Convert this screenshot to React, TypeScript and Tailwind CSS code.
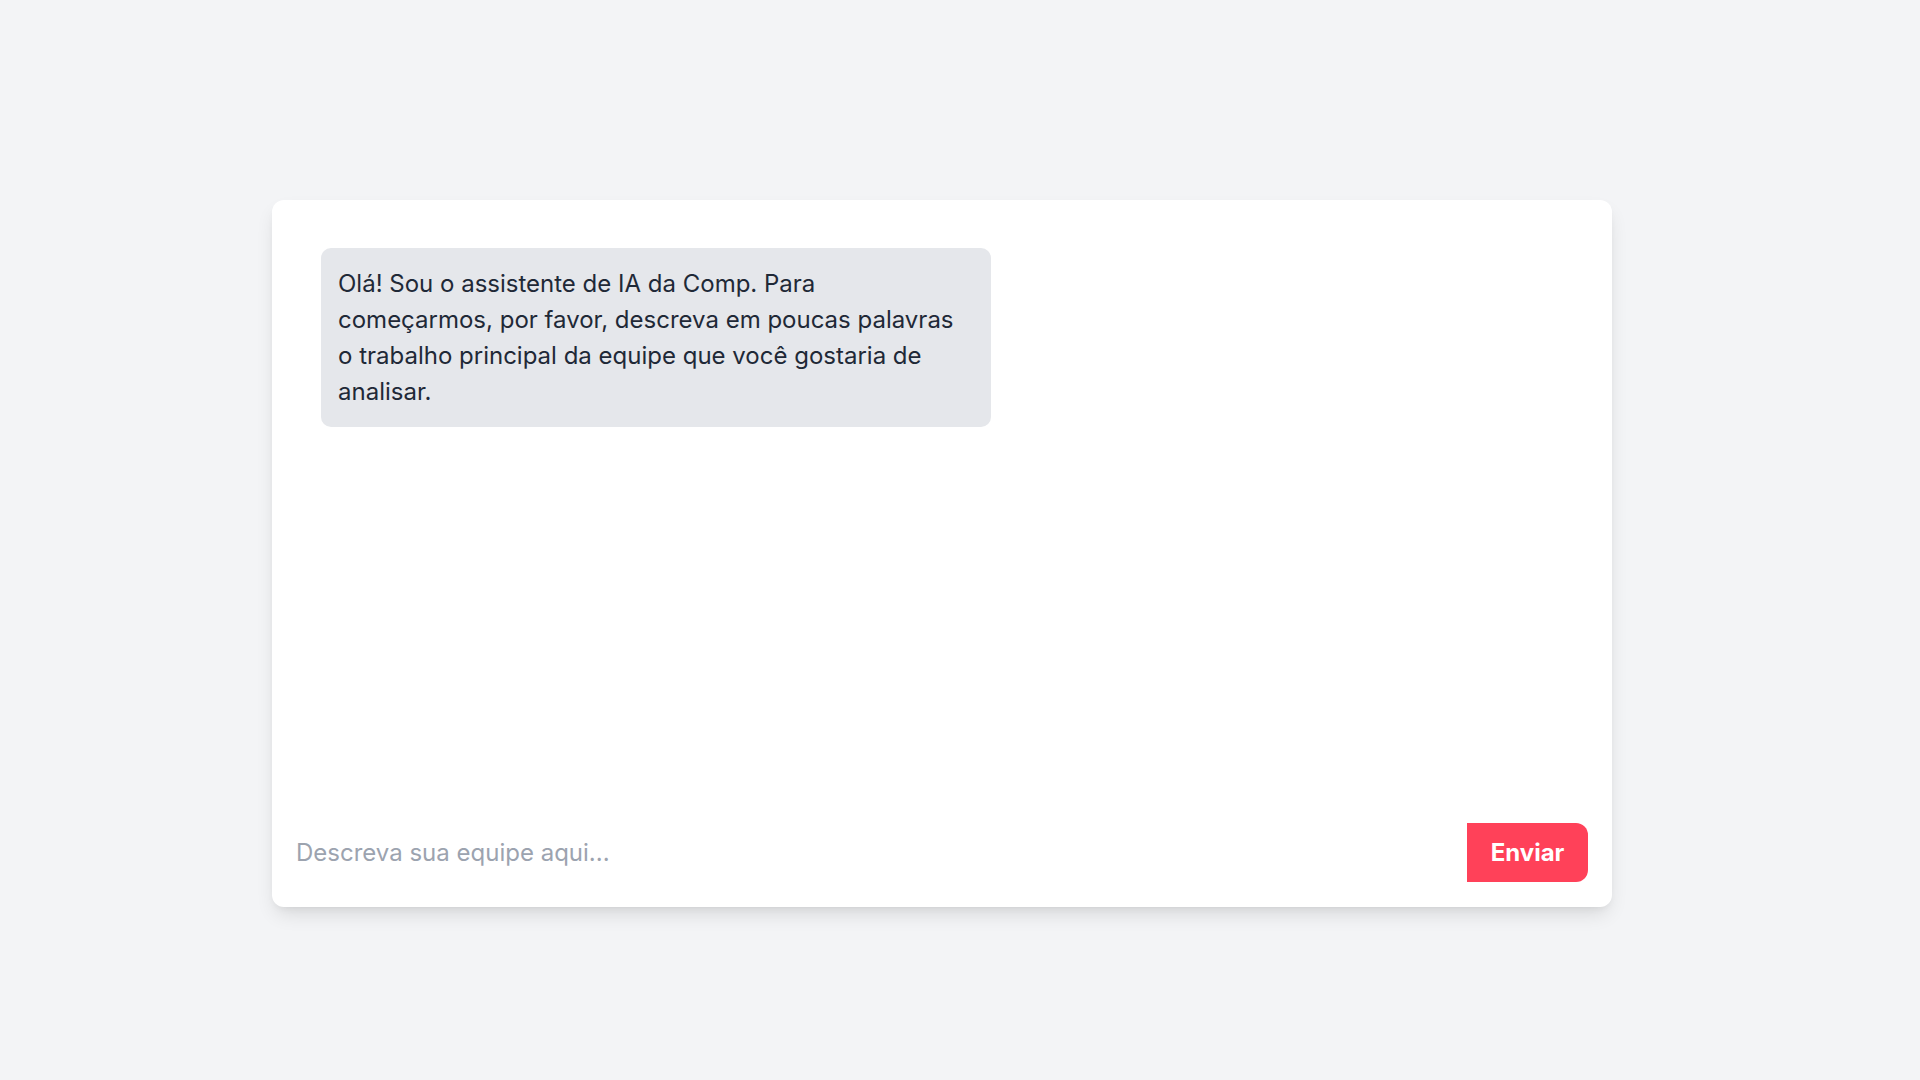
export default function App() {
  return (
    <div
      className="min-h-screen bg-[#f3f4f6] pt-[200px]"
      style={{ fontFamily: 'Inter, "Noto Sans", sans-serif' }}
    >
      <div className="ml-[272px] flex h-[707px] w-[1340px] flex-col rounded-[12px] bg-white shadow-[0_10px_20px_-4px_rgba(0,0,0,0.12),0_4px_8px_-4px_rgba(0,0,0,0.08)]">
        <div className="flex-1 px-[49px] pt-[48px]">
          <div className="w-[670px] rounded-[10px] bg-[#e5e7eb] px-[17px] pb-[17px] pt-[18px] text-[24px] leading-[36px] text-[#1f2937]">
            Olá! Sou o assistente de IA da Comp. Para começarmos, por favor, descreva em poucas
            palavras o trabalho principal da equipe que você gostaria de analisar.
          </div>
        </div>

        <div className="flex items-center pb-[25px] pl-[24px] pr-[24px]">
          <input
            className="h-[59px] flex-1 bg-transparent text-[24px] text-[#1f2937] outline-none placeholder:text-[#9ca3af]"
            placeholder="Descreva sua equipe aqui..."
          />
          <button className="h-[59px] w-[121px] rounded-r-[12px] bg-[#ff4159] text-[24px] font-bold text-white">
            Enviar
          </button>
        </div>
      </div>
    </div>
  )
}
